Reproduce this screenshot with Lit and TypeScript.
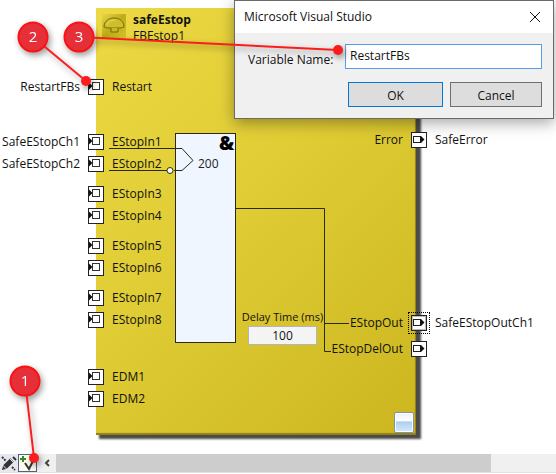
import { LitElement, html, svg, css, nothing } from "lit";
import { customElement, property, state } from "lit/decorators.js";

interface Port {
  name: string;
  variable?: string;
  selected?: boolean;
}

const inputs: Port[][] = [
  [{ name: "Restart", variable: "RestartFBs" }],
  [
    { name: "EStopIn1", variable: "SafeEStopCh1" },
    { name: "EStopIn2", variable: "SafeEStopCh2" },
  ],
  [{ name: "EStopIn3" }, { name: "EStopIn4" }],
  [{ name: "EStopIn5" }, { name: "EStopIn6" }],
  [{ name: "EStopIn7" }, { name: "EStopIn8" }],
  [{ name: "EDM1" }, { name: "EDM2" }],
];

const outputs: Port[][] = [
  [{ name: "Error", variable: "SafeError" }],
  [{ name: "EStopOut", variable: "SafeEStopOutCh1", selected: true }, { name: "EStopDelOut" }],
];

/** The small square connector at the edge of a function block. */
@customElement("fb-pin")
export class FbPin extends LitElement {
  @property() direction: "in" | "out" = "in";
  @property({ type: Boolean, reflect: true }) selected = false;

  static styles = css`
    :host {
      display: block;
      width: 16px;
      height: 16px;
    }
    :host([selected]) {
      outline: 1px dotted #000;
      outline-offset: 2px;
    }
    svg {
      display: block;
    }
  `;

  render() {
    return html`<svg width="16" height="16" viewBox="0 0 16 16" aria-hidden="true">
      <rect x="0.5" y="0.5" width="15" height="15" fill="#fff" stroke="#222" />
      ${this.direction === "in"
        ? svg`<rect x="4.5" y="3.5" width="7" height="7" fill="#fff" stroke="#333" />
            <path d="M1 3.5v7l3.5-3.5z" fill="#111" />`
        : svg`<rect x="2.5" y="4.5" width="7" height="6" fill="#fff" stroke="#222" />
            <path d="M9 4h1l3.5 3.5L10 11H9z" fill="#111" />`}
      ${this.selected
        ? svg`<rect x="1.5" y="1.5" width="13" height="13" fill="none" stroke="#777" stroke-dasharray="1 1" />`
        : nothing}
    </svg>`;
  }
}

/** The dialog that asks for the name of a variable. */
@customElement("name-dialog")
export class NameDialog extends LitElement {
  @state() private value = "RestartFBs";

  static styles = css`
    :host {
      display: block;
      box-sizing: border-box;
      border: 1px solid #6a6a6a;
      background: #f0f0f0;
      box-shadow: 0 4px 14px rgba(0, 0, 0, 0.35);
      font-size: 12px;
    }
    header {
      display: flex;
      align-items: center;
      justify-content: space-between;
      height: 32px;
      padding: 0 12px 0 9px;
      background: #fff;
    }
    h2 {
      margin: 0;
      font-size: 12px;
      font-weight: 400;
    }
    button,
    input {
      box-sizing: border-box;
      margin: 0;
      font: inherit;
      color: inherit;
    }
    .close {
      display: flex;
      padding: 0;
      border: 0;
      background: none;
    }
    form {
      display: grid;
      gap: 13px;
      padding: 11px 11px 11px 13px;
    }
    .field {
      display: flex;
      align-items: center;
      justify-content: space-between;
      white-space: nowrap;
    }
    label {
      padding-top: 6px;
    }
    input {
      width: 197px;
      height: 25px;
      padding: 0 4px 2px;
      border: 1px solid #569de5;
      background: #fff;
      outline: 0;
    }
    .actions {
      display: flex;
      justify-content: flex-end;
      gap: 7px;
    }
    .actions button {
      width: 92px;
      height: 25px;
      padding: 2px 0 0;
      border: 1px solid #707070;
      border-radius: 0;
      background: #ddd;
    }
    .actions .primary {
      width: 95px;
      border-color: #0078d7;
    }
  `;

  private onInput(e: Event) {
    this.value = (e.target as HTMLInputElement).value;
  }

  render() {
    return html`
      <header>
        <h2>Microsoft Visual Studio</h2>
        <button class="close" aria-label="Close">
          <svg width="12" height="12" viewBox="0 0 12 12" fill="none" stroke="#111">
            <path d="M1 1l10 10M11 1L1 11" />
          </svg>
        </button>
      </header>
      <form @submit=${(e: Event) => e.preventDefault()}>
        <div class="field">
          <label for="name">Variable Name:</label>
          <input id="name" type="text" .value=${this.value} @input=${this.onInput} />
        </div>
        <div class="actions">
          <button class="primary" type="submit">OK</button>
          <button type="button">Cancel</button>
        </div>
      </form>
    `;
  }
}

@customElement("app-root")
export class AppRoot extends LitElement {
  static styles = css`
    :host {
      position: relative;
      display: flex;
      flex-direction: column;
      min-height: 100vh;
      overflow: hidden;
      background: #fff;
      color: #111;
      font: 12px/16px "Open Sans", "Noto Sans", sans-serif;
    }
    .canvas {
      position: relative;
      flex: 1;
      min-height: 448px;
    }
    .block {
      position: absolute;
      left: 96px;
      top: 8px;
      display: flex;
      flex-direction: column;
      justify-content: space-between;
      box-sizing: border-box;
      width: 320px;
      height: 427px;
      padding: 4px 2px 2px 6px;
      background: linear-gradient(135deg, #ecd943, #e0cc34 45%, #cbb61f);
      box-shadow: inset -1px -2px 1px #8f8016, 4px 3px 2px 1px #4a4a4a;
      clip-path: inset(0 -12px -12px 0);
    }
    .head {
      display: flex;
      gap: 7px;
    }
    .head h1,
    .head p {
      margin: 0;
      font-size: 12px;
      line-height: 16px;
    }
    .estop {
      margin-top: 2px;
    }
    .corner {
      align-self: flex-end;
      box-sizing: border-box;
      width: 20px;
      height: 21px;
      padding: 0;
      border: 1px solid #7d97a8;
      border-radius: 2px;
      background: linear-gradient(#f1eef3, #fff 42%, #a8d0f2 46%, #d6eafb);
      box-shadow: inset 0 0 0 1px #fff;
    }
    .wires {
      position: absolute;
      left: 96px;
      top: 8px;
    }
    .amp {
      font-size: 19px;
      font-weight: 800;
      fill: #000;
      stroke: none;
    }
    .count {
      fill: #222;
      stroke: none;
    }
    .delay {
      position: absolute;
      left: 242px;
      top: 309px;
      display: flex;
      flex-direction: column;
      align-items: center;
      width: 81px;
      gap: 1px;
      white-space: nowrap;
    }
    .delay label {
      font-size: 11px;
    }
    .delay input {
      box-sizing: border-box;
      width: 69px;
      height: 19px;
      padding: 0;
      border: 1px solid #b5b5b5;
      background: #f4f4f4;
      color: inherit;
      font: inherit;
      text-align: center;
    }
    ul {
      margin: 0;
      padding: 0;
      list-style: none;
    }
    .ports {
      position: absolute;
      display: grid;
    }
    .group {
      display: grid;
      grid-auto-rows: 22px;
    }
    .inputs {
      left: 0;
      top: 76px;
      row-gap: 8px;
    }
    .inputs > :first-child {
      padding-bottom: 25px;
    }
    .inputs > :last-child {
      padding-top: 27px;
    }
    .outputs {
      left: 325px;
      top: 129px;
      row-gap: 161px;
    }
    .outputs .group {
      row-gap: 4px;
    }
    .port {
      display: grid;
      align-items: center;
      white-space: nowrap;
    }
    .inputs .port {
      grid-template-columns: 80px 16px auto;
      column-gap: 8px;
    }
    .outputs .port {
      grid-template-columns: 78px 16px auto;
      column-gap: 8px;
    }
    .port > :first-child {
      justify-self: end;
    }
    .dialog {
      position: absolute;
      left: 234px;
      top: 0;
      width: 320px;
    }
    .toolbar {
      display: flex;
      align-items: stretch;
      height: 18px;
      margin-bottom: 1px;
      border-bottom: 1px solid #e2e2e2;
      background: #f0f0f0;
    }
    .tool {
      display: flex;
      align-items: center;
      justify-content: center;
      box-sizing: border-box;
      width: 18px;
      padding: 0;
      border: 0;
      background: #e6e7ee;
    }
    .tool.active {
      width: 19px;
      border: 1px solid #4b6189;
      background: #fffbea;
    }
    .tool.back {
      width: 19px;
      background: #f0f0f0;
    }
    .track {
      flex: 1;
    }
    .thumb {
      width: 87%;
      height: 100%;
      background: #cdcdcd;
    }
    .callouts {
      position: absolute;
      left: 0;
      top: 0;
      width: 100%;
      height: 100%;
      pointer-events: none;
      filter: drop-shadow(2px 3px 3px rgba(0, 0, 0, 0.4));
    }
    .num {
      fill: #fff;
      font: 15px "Open Sans", sans-serif;
      text-anchor: middle;
    }
  `;

  private inputPort(p: Port) {
    return html`<li class="port">
      <span>${p.variable ?? ""}</span>
      <fb-pin direction="in"></fb-pin>
      <span>${p.name}</span>
    </li>`;
  }

  private outputPort(p: Port) {
    return html`<li class="port">
      <span>${p.name}</span>
      <fb-pin direction="out" ?selected=${p.selected}></fb-pin>
      <span>${p.variable ?? ""}</span>
    </li>`;
  }

  private callout(n: number, x: number, y: number, tx: number, ty: number) {
    return svg`
      <path d="M${x} ${y}L${tx} ${ty}" stroke="#fb1d1d" stroke-width="2" />
      <circle cx=${tx} cy=${ty} r="5" fill="#fb1d1d" />
      <circle cx=${x} cy=${y} r="14.5" fill="#e5303a" stroke="#fb1212" stroke-width="2" />
      <text class="num" x=${x} y=${y + 5}>${n}</text>`;
  }

  render() {
    return html`
      <main class="canvas">
        <section class="block">
          <div class="head">
            <svg class="estop" width="24" height="24" viewBox="0 0 24 24">
              <defs>
                <linearGradient id="tile" x2="1" y2="1">
                  <stop offset="0" stop-color="#e8d64c" />
                  <stop offset="0.5" stop-color="#bdab17" />
                  <stop offset="1" stop-color="#d6c42b" />
                </linearGradient>
              </defs>
              <rect width="24" height="24" fill="url(#tile)" />
              <path d="M2 13C2 7 7 4 12 4s10 3 10 9c-2 1-4 1-6 1H8c-2 0-4 0-6-1z" fill="#cfbd2a" stroke="#75690f" />
              <path d="M5 11c1-3 4-5 8-5" fill="none" stroke="#eadb6a" />
              <path d="M9 14v4h7v-4" fill="#c9b728" stroke="#75690f" />
            </svg>
            <div>
              <h1>safeEstop</h1>
              <p>FBEstop1</p>
            </div>
          </div>
          <button class="corner" aria-label="Block details"></button>
        </section>

        <svg class="wires" width="320" height="427" viewBox="96 8 320 427" fill="none" stroke="#2b2a12">
          <rect x="175.5" y="133.5" width="60" height="209" fill="#eff6ff" />
          <path d="M109 148.5H182L193 160.5L182 170.5H174M109 170.5H167" />
          <circle cx="170" cy="170.5" r="3" fill="#fff" />
          <path d="M236 208.5H324.5V351.5H331M324.5 323.5H349" />
          <text class="amp" x="219" y="150">&amp;</text>
          <text class="count" x="198" y="168">200</text>
        </svg>

        <div class="delay">
          <label for="delay">Delay Time (ms)</label>
          <input id="delay" type="text" value="100" />
        </div>

        <ul class="ports inputs">
          ${inputs.map((g) => html`<li><ul class="group">${g.map((p) => this.inputPort(p))}</ul></li>`)}
        </ul>
        <ul class="ports outputs">
          ${outputs.map((g) => html`<li><ul class="group">${g.map((p) => this.outputPort(p))}</ul></li>`)}
        </ul>

        <name-dialog class="dialog" role="dialog" aria-label="Microsoft Visual Studio"></name-dialog>
      </main>

      <footer class="toolbar">
        <button class="tool" aria-label="Edit">
          <svg width="16" height="16" viewBox="0 0 16 16" fill="none" stroke="#333">
            <path d="M4 12L11 5" stroke-width="5" />
            <path d="M1 15l1-4 3 3z" fill="#333" stroke="none" />
            <path d="M12 2l3 3" stroke-width="2" />
            <path d="M9 4l4 4" stroke="#e6e7ee" />
            <path d="M1 2l4 4M11 12l3 3" stroke-width="2" stroke-dasharray="2 1" />
          </svg>
        </button>
        <button class="tool active" aria-label="Add variable">
          <svg width="17" height="16" viewBox="0 0 17 16" fill="none">
            <path d="M4 1v6M1 4h6" stroke="#2f8a2f" stroke-width="2" />
            <path d="M6 8l4 6 4-8" stroke="#333" stroke-width="2" />
          </svg>
        </button>
        <button class="tool back" aria-label="Scroll left">
          <svg width="8" height="8" viewBox="0 0 8 8" fill="none" stroke="#444" stroke-width="2">
            <path d="M6 1L3 4l3 3" />
          </svg>
        </button>
        <div class="track"><div class="thumb"></div></div>
      </footer>

      <svg class="callouts" aria-hidden="true">
        ${this.callout(1, 25, 381, 34, 458)} ${this.callout(2, 33, 37, 86, 81)}
        ${this.callout(3, 79, 37, 338, 50)}
      </svg>
    `;
  }
}
